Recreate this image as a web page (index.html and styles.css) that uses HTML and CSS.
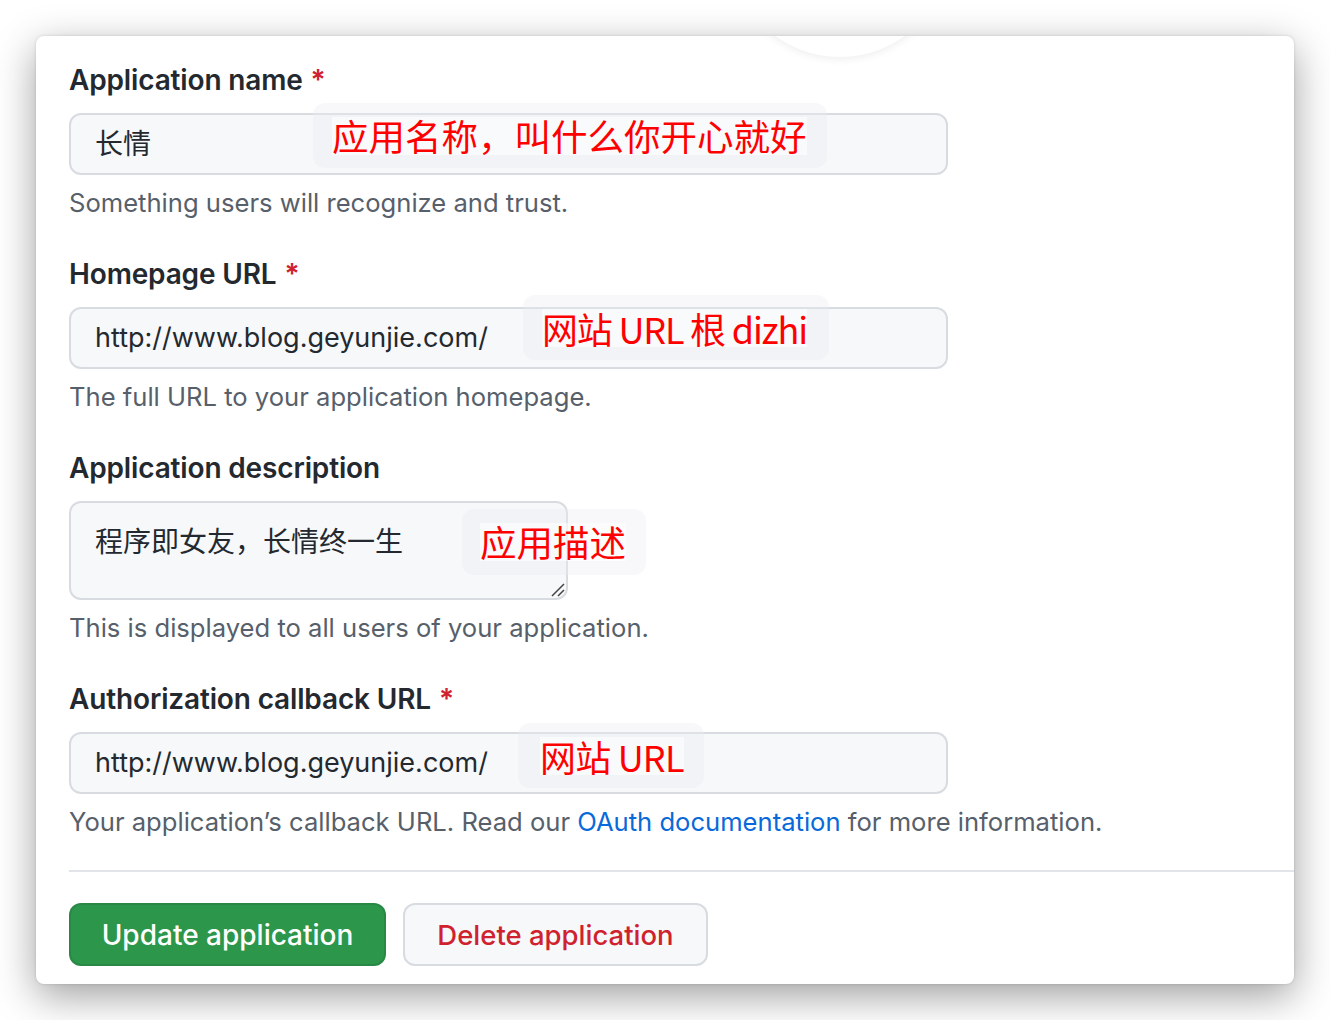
FILE: index.html
```html
<!DOCTYPE html>
<html lang="zh">
<head>
<meta charset="utf-8">
<title>Application settings</title>
<link rel="stylesheet" href="styles.css">
</head>
<body>
<div class="card">
  <div class="avatar"></div>
  <form class="form">
    <div class="group">
      <label class="label">Application name <span class="req">*</span></label>
      <div class="field-wrap">
        <div class="input cjk">长情</div>
        <div class="note note-1"><span>应用名称，叫什么你开心就好</span></div>
      </div>
      <p class="help">Something users will recognize and trust.</p>
    </div>
    <div class="group">
      <label class="label">Homepage URL <span class="req">*</span></label>
      <div class="field-wrap">
        <div class="input">http://www.blog.geyunjie.com/</div>
        <div class="note note-2"><span>网站 URL 根 dizhi</span></div>
      </div>
      <p class="help">The full URL to your application homepage.</p>
    </div>
    <div class="group">
      <label class="label">Application description</label>
      <div class="field-wrap">
        <div class="textarea cjk">程序即女友，长情终一生
          <svg class="grip" width="16" height="16" viewBox="0 0 16 16"><path d="M15 3 L3 15 M15 9 L9 15" stroke="#444" stroke-width="1.5" fill="none"/></svg>
        </div>
        <div class="note note-3"><span>应用描述</span></div>
      </div>
      <p class="help">This is displayed to all users of your application.</p>
    </div>
    <div class="group group-last">
      <label class="label">Authorization callback URL <span class="req">*</span></label>
      <div class="field-wrap">
        <div class="input">http://www.blog.geyunjie.com/</div>
        <div class="note note-4"><span>网站 URL</span></div>
      </div>
      <p class="help">Your application’s callback URL. Read our <a class="link" href="#">OAuth documentation</a> for more information.</p>
    </div>
    <hr class="divider">
    <div class="actions">
      <button type="button" class="btn btn-primary">Update application</button>
      <button type="button" class="btn btn-danger">Delete application</button>
    </div>
  </form>
</div>
</body>
</html>
```
FILE: styles.css
```css
* { box-sizing: border-box; }
html, body { margin: 0; padding: 0; background: #ffffff; }
body {
  font-family: "Inter", "Noto Sans CJK SC", sans-serif;
  color: #24292f;
  padding: 36px 36px 36px 36px;
}
.card {
  position: relative;
  width: 1258px;
  height: 948px;
  background: #fff;
  border-radius: 8px;
  overflow: hidden;
  box-shadow: 0 12px 40px rgba(0,0,0,0.38), 0 0 3px rgba(0,0,0,0.15);
  padding: 24px 0 0 33px;
}
.avatar {
  position: absolute;
  left: 694px;
  top: -199px;
  width: 220px;
  height: 220px;
  border-radius: 50%;
  background: #fff;
  box-shadow: 0 2px 8px rgba(0,0,0,0.07);
}
.form { position: relative; }
.group { margin-bottom: 33px; }
.group-last { margin-bottom: 0; }
.label {
  display: block;
  font-size: 28px;
  font-weight: 600;
  line-height: 40px;
  color: #24292f;
  letter-spacing: -0.15px;
}
.req { color: #cf222e; margin-left: 1px; }
.field-wrap { position: relative; margin-top: 13px; }
.input, .textarea {
  width: 879px;
  height: 62px;
  background: #f6f8fa;
  border: 2px solid #d8dce1;
  border-radius: 12px;
  padding: 0 24px;
  font-size: 27px;
  line-height: 58px;
  color: #24292f;
  font-family: "Inter", "Noto Sans CJK SC", sans-serif;
}
.cjk { font-size: 28px; }
.textarea {
  position: relative;
  width: 499px;
  height: 99px;
  padding-top: 10px;
  line-height: 58px;
}
.grip { position: absolute; right: 1px; bottom: 1px; }
.help {
  margin: 10px 0 0;
  font-size: 25.6px;
  line-height: 36px;
  color: #57606a;
}
.link { color: #0969da; text-decoration: none; }
.note {
  position: absolute;
  background: rgba(235,236,240,0.35);
  border-radius: 12px;
  display: flex;
  align-items: center;
}
.note span {
  background: rgba(255,255,255,0.55);
  color: #ff0000;
  font-family: "Noto Sans CJK SC", sans-serif;
  font-size: 36.5px;
  line-height: 38px;
  white-space: nowrap;
}
.note-1 { left: 244px; top: -10px; width: 514px; height: 65px; padding-left: 19px; }
.note-2 { left: 454px; top: -12px; width: 306px; height: 65px; padding-left: 19px; }
.note-3 { left: 393px; top: 8px; width: 184px; height: 66px; padding-left: 18px; }
.note-4 { left: 449px; top: -9px; width: 186px; height: 65px; padding-left: 22px; }
.note-2 span { font-size: 36px; letter-spacing: -1.2px; word-spacing: 0; }
.note-4 span { font-size: 36px; letter-spacing: -0.8px; word-spacing: 0; }
.divider {
  border: 0;
  height: 2px;
  background: #e1e4e8;
  margin: 30px 0 0;
}
.actions { display: flex; gap: 17px; margin-top: 31px; }
.btn {
  height: 63px;
  border-radius: 12px;
  font-family: "Inter", sans-serif;
  font-size: 28px;
  font-weight: 500;
  padding: 0;
  cursor: pointer;
}
.btn-primary {
  width: 317px;
  background: #2c974b;
  color: #fff;
  border: 2px solid rgba(27,31,35,0.12);
}
.btn-danger {
  width: 305px;
  background: #f6f8fa;
  color: #cf222e;
  border: 2px solid #d8dce1;
  font-size: 27.5px;
}
```
